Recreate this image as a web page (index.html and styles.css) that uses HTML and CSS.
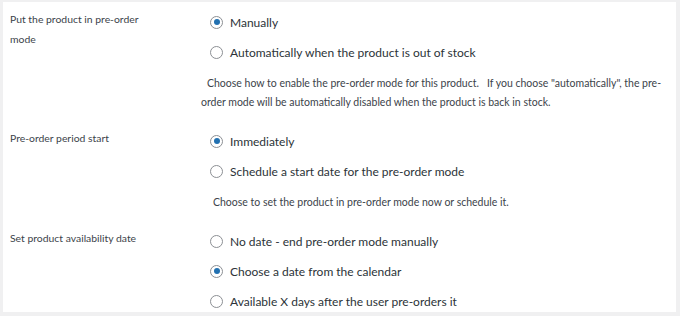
FILE: index.html
```html
<!DOCTYPE html>
<html lang="en">
<head>
  <meta charset="UTF-8" />
  <title>Pre-order settings</title>
  <link rel="stylesheet" href="styles.css">
</head>
<body>
  <div class="panel">
    <!-- Pre-order mode -->
    <div class="field">
      <div class="field-label">Put the product in pre-order mode</div>
      <div class="field-body">
        <label class="radio-row"><span class="radio checked"></span>Manually</label>
        <label class="radio-row"><span class="radio"></span>Automatically when the product is out of stock</label>
        <p class="desc">Choose how to enable the pre-order mode for this product. &nbsp; If you choose "automatically", the pre-order mode will be automatically disabled when the product is back in stock.</p>
      </div>
    </div>
    <!-- Period start -->
    <div class="field">
      <div class="field-label">Pre-order period start</div>
      <div class="field-body">
        <label class="radio-row"><span class="radio checked"></span>Immediately</label>
        <label class="radio-row"><span class="radio"></span>Schedule a start date for the pre-order mode</label>
        <p class="desc desc-indent">Choose to set the product in pre-order mode now or schedule it.</p>
      </div>
    </div>
    <!-- Availability date -->
    <div class="field">
      <div class="field-label">Set product availability date</div>
      <div class="field-body">
        <label class="radio-row"><span class="radio"></span>No date - end pre-order mode manually</label>
        <label class="radio-row"><span class="radio checked"></span>Choose a date from the calendar</label>
        <label class="radio-row"><span class="radio"></span>Available X days after the user pre-orders it</label>
      </div>
    </div>
  </div>
</body>
</html>
```

FILE: styles.css
```css
* { margin: 0; padding: 0; box-sizing: border-box; }
body {
  font-family: 'Lato', sans-serif;
  background: #f0f0f1;
  color: #3c434a;
  width: 680px;
  height: 316px;
  overflow: hidden;
}
.panel {
  background: #fff;
  margin: 2px 4px 0 3px;
  height: 310px;
  padding: 5px 7px 0 7px;
}
.field {
  display: grid;
  grid-template-columns: 191px 1fr;
  padding-bottom: 14px;
}
.field-label {
  font-size: 10.4px;
  line-height: 20px;
  padding-top: 2px;
  max-width: 140px;
}
.field-body {
  display: flex;
  flex-direction: column;
}
.radio-row {
  display: flex;
  align-items: center;
  height: 30px;
  font-size: 12px;
  color: #2c3338;
  padding-left: 9px;
}
.radio {
  width: 13px;
  height: 13px;
  border: 1px solid #8c8f94;
  border-radius: 50%;
  margin-right: 7px;
  position: relative;
  flex-shrink: 0;
}
.radio.checked::after {
  content: "";
  position: absolute;
  left: 2.5px;
  top: 2.5px;
  width: 6px;
  height: 6px;
  border-radius: 50%;
  background: #2271b1;
}
.desc {
  font-size: 10.5px;
  line-height: 19px;
  margin-top: 7px;
  margin-right: -4px;
  text-indent: 6px;
}
.desc-indent {
  text-indent: 12px;
}
```
